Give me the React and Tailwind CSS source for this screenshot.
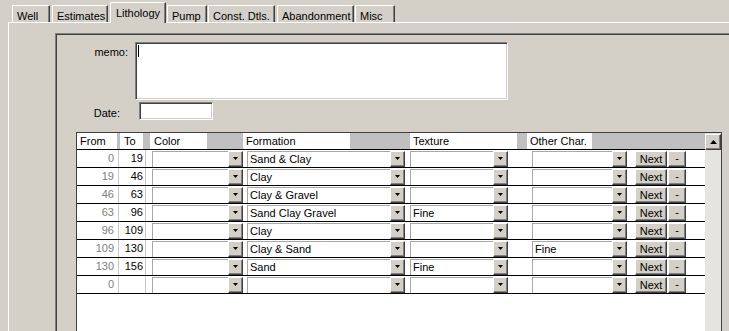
import React from "react";

const tabs = [
  { label: "Well", cls: "ml-[12px] w-[38px]" },
  { label: "Estimates", cls: "ml-[2px] w-[56px]" },
  { label: "Lithology", cls: "ml-[2px] w-[56px]", active: true },
  { label: "Pump", cls: "ml-[1px] w-[40px]" },
  { label: "Const. Dtls.", cls: "ml-[1px] w-[67px]" },
  { label: "Abandonment", cls: "ml-[2px] w-[77px]" },
  { label: "Misc", cls: "ml-[1px] w-[40px]" },
];

const rows = [
  ["0", "19", "", "Sand & Clay", "", ""],
  ["19", "46", "", "Clay", "", ""],
  ["46", "63", "", "Clay & Gravel", "", ""],
  ["63", "96", "", "Sand Clay Gravel", "Fine", ""],
  ["96", "109", "", "Clay", "", ""],
  ["109", "130", "", "Clay & Sand", "", "Fine"],
  ["130", "156", "", "Sand", "Fine", ""],
  ["0", "", "", "", "", ""],
];

const raised =
  "bg-[#d4d0c8] border border-t-white border-l-white border-r-[#404040] border-b-[#404040] shadow-[inset_-1px_-1px_0_#808080]";
const sunken =
  "bg-white border border-t-[#808080] border-l-[#808080] border-r-white border-b-white shadow-[inset_1px_1px_0_#404040,inset_-1px_-1px_0_#d4d0c8]";

const DropBtn = () => (
  <div className={`w-[15px] h-[16px] flex items-center justify-center ${raised}`}>
    <svg width="5" height="3" viewBox="0 0 5 3">
      <path d="M0 0h5L2.5 3z" fill="#000" />
    </svg>
  </div>
);

const Combo = ({ w, value }) => (
  <div className="flex h-[16px] mt-[1px]">
    <div className={`${w} h-full bg-white border-l border-t border-[#a8a8a8] pl-[2px] leading-[15px] truncate`}>
      {value}
    </div>
    <DropBtn />
  </div>
);

export default function App() {
  return (
    <div className="w-[729px] h-[331px] overflow-hidden bg-[#d4d0c8] text-[11px] text-black font-['Liberation_Sans',Arial,sans-serif]">
      {/* tabs */}
      <div className="flex items-end h-[22px] relative z-10">
        {tabs.map((t) => (
          <div
            key={t.label}
            className={`${t.cls} bg-[#d4d0c8] border-t border-l border-white border-r border-r-[#404040] shadow-[inset_-1px_0_0_#808080] ${
              t.active ? "h-[21px] -mb-[1px] pl-[5px] pt-[2px]" : "h-[17px] pl-[4px] pt-[2px]"
            }`}
          >
            {t.label}
          </div>
        ))}
      </div>

      {/* tab page */}
      <div className="ml-[8px] border-t border-l border-white h-[320px]">
        <div className="ml-[46px] mt-[10px] h-[300px] border-t border-l border-[#808080] shadow-[inset_1px_1px_0_#404040]">
          {/* memo */}
          <div className="flex pt-[8px]">
            <div className="w-[72px] text-right pt-[2px]">memo:</div>
            <div className={`ml-[7px] w-[373px] h-[58px] ${sunken} relative`}>
              <div className="absolute left-[2px] top-[2px] w-px h-[12px] bg-black" />
            </div>
          </div>

          {/* date */}
          <div className="flex mt-[2px]">
            <div className="w-[64px] text-right pt-[3px]">Date:</div>
            <div className={`ml-[19px] w-[74px] h-[18px] ${sunken}`} />
          </div>

          {/* grid */}
          <div className="ml-[20px] mt-[10px] w-[646px] h-[210px] flex border-t border-l border-r border-[#404040]">
            <div className="w-[628px] bg-white">
              {/* header */}
              <div className="flex h-[17px] bg-[#c0c0c0] border-b border-black">
                <div className="w-[40px] bg-white pl-[3px] leading-[16px]">From</div>
                <div className="ml-[3px] w-[23px] bg-white pl-[4px] leading-[16px]">To</div>
                <div className="ml-[7px] w-[57px] bg-white pl-[4px] leading-[16px]">Color</div>
                <div className="ml-[36px] w-[107px] bg-white pl-[3px] leading-[16px]">Formation</div>
                <div className="ml-[60px] w-[107px] bg-white pl-[3px] leading-[16px]">Texture</div>
                <div className="ml-[10px] w-[65px] bg-white pl-[3px] leading-[16px]">Other Char.</div>
              </div>

              {rows.map((r, i) => (
                <div key={i} className="flex h-[18px] border-b border-black">
                  <div className="w-[42px] border-r border-[#c8c8c8] text-right pr-[4px] text-[#808080] leading-[17px]">
                    {r[0]}
                  </div>
                  <div className="w-[27px] border-r border-[#c8c8c8] text-right pr-[2px] leading-[17px]">
                    {r[1]}
                  </div>
                  <div className="ml-[6px]">
                    <Combo w="w-[76px]" value={r[2]} />
                  </div>
                  <div className="ml-[4px]">
                    <Combo w="w-[143px]" value={r[3]} />
                  </div>
                  <div className="ml-[5px]">
                    <Combo w="w-[83px]" value={r[4]} />
                  </div>
                  <div className="ml-[24px]">
                    <Combo w="w-[80px]" value={r[5]} />
                  </div>
                  <div className={`ml-[8px] mt-[1px] w-[32px] h-[16px] ${raised} text-center leading-[14px]`}>
                    Next
                  </div>
                  <div className={`ml-[1px] mt-[1px] w-[18px] h-[16px] ${raised} text-center leading-[12px]`}>
                    -
                  </div>
                </div>
              ))}
            </div>

            {/* scrollbar */}
            <div className="w-[16px] bg-[#e6e4de] pt-[1px]">
              <div className={`w-[16px] h-[16px] flex items-center justify-center ${raised}`}>
                <svg width="7" height="4" viewBox="0 0 7 4">
                  <path d="M0 4h7L3.5 0z" fill="#000" />
                </svg>
              </div>
            </div>
          </div>
        </div>
      </div>
    </div>
  );
}
